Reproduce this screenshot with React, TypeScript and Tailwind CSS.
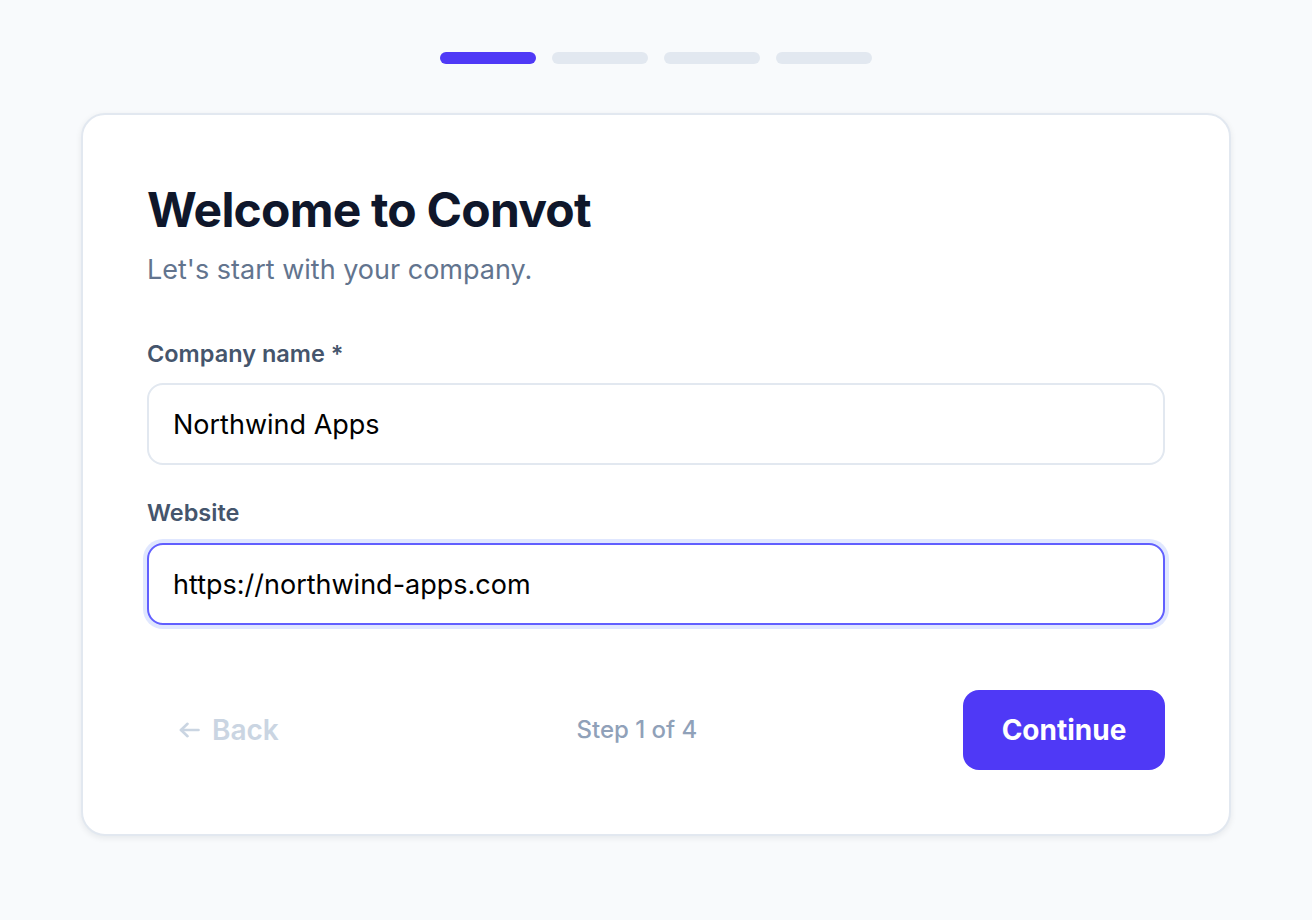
import { useState } from 'react'

const steps = [0, 1, 2, 3]

export default function App() {
  const [company, setCompany] = useState('Northwind Apps')
  const [website, setWebsite] = useState('https://northwind-apps.com')
  const current = 0

  return (
    <div
      className="min-h-screen bg-slate-50 pt-[52px] pb-16"
      style={{ fontFamily: 'Inter, "Noto Sans", sans-serif' }}
    >
      {/* Progress */}
      <div className="flex justify-center gap-4">
        {steps.map((s) => (
          <div
            key={s}
            className={
              s <= current
                ? 'h-3 w-24 rounded-full bg-indigo-600'
                : 'h-3 w-24 rounded-full bg-slate-200'
            }
          />
        ))}
      </div>

      {/* Card */}
      <div className="mx-auto mt-[49px] w-[1150px] rounded-3xl border-2 border-slate-200 bg-white p-16 shadow-[0_2px_6px_rgba(15,23,42,0.08)]">
        <h1 className="text-5xl leading-[62px] font-bold tracking-[-0.8px] text-slate-900">
          Welcome to Convot
        </h1>
        <p className="mt-[11px] text-[27px] leading-9 text-slate-500">
          Let's start with your company.
        </p>

        <form onSubmit={(e) => e.preventDefault()} className="mt-[50px]">
          <label className="mb-[13px] block text-[23.5px] leading-8 font-semibold text-slate-600">
            Company name *
          </label>
          <input
            value={company}
            onChange={(e) => setCompany(e.target.value)}
            className="block h-[82px] w-full rounded-2xl border-2 border-slate-200 bg-white px-6 text-[27px] text-black outline-none"
          />

          <label className="mt-[32px] mb-[14px] block text-[23.5px] leading-8 font-semibold text-slate-600">
            Website
          </label>
          <input
            value={website}
            onChange={(e) => setWebsite(e.target.value)}
            className="block h-[82px] w-full rounded-2xl border-2 border-indigo-500 bg-white px-6 text-[27px] text-black outline-none ring-4 ring-indigo-100"
          />

          {/* Footer */}
          <div className="mt-[65px] flex items-center justify-between">
            <button
              type="button"
              disabled
              className="flex items-center gap-3 px-8 text-[28px] font-semibold text-slate-300"
            >
              <svg width="21" height="16" viewBox="0 0 21 16" fill="none" stroke="currentColor" strokeWidth="2.6" strokeLinecap="round" strokeLinejoin="round">
                <path d="M19.5 8H2" />
                <path d="M8.5 1.8L2 8l6.5 6.2" />
              </svg>
              Back
            </button>
            <span className="text-2xl font-medium text-slate-400">Step 1 of 4</span>
            <button
              type="submit"
              className="h-20 w-[202px] rounded-2xl bg-indigo-600 text-[28px] font-bold text-white"
            >
              Continue
            </button>
          </div>
        </form>
      </div>
    </div>
  )
}
